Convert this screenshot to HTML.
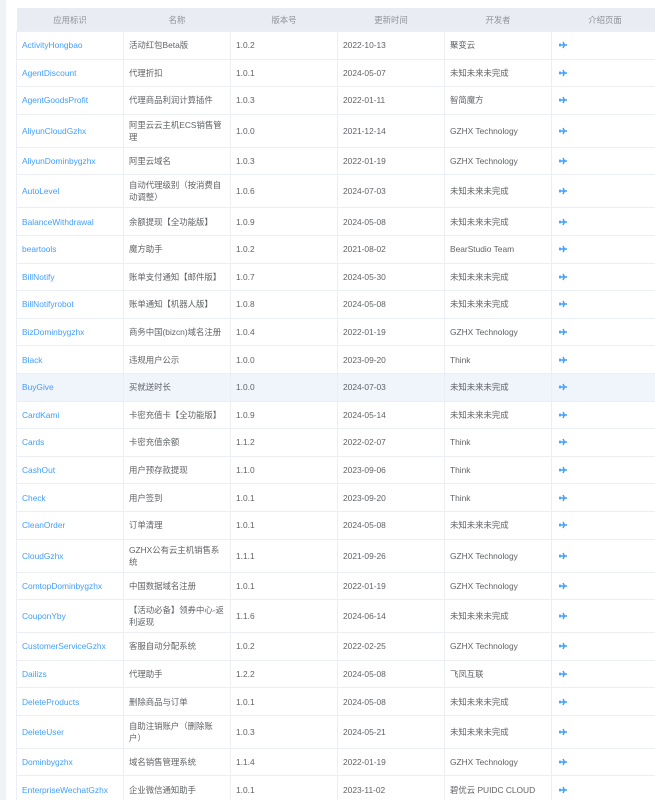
<!DOCTYPE html>
<html><head><meta charset="utf-8"><style>
html,body{margin:0;padding:0;width:655px;height:800px;overflow:hidden;background:#fff;}
body{font-family:"Liberation Sans","Noto Sans CJK SC",sans-serif;font-size:8.4px;color:#606266;position:relative}
.strip{position:absolute;left:0;top:0;width:6px;height:800px;background:#f0f2f5}
table{position:absolute;left:16px;top:8px;border-collapse:collapse;table-layout:fixed;width:642px}
col{width:107px}
th{height:23px;background:#e9ecf3;color:#909399;font-weight:normal;text-align:center;padding:0;border:none}
td{border:1px solid #ebeef5;padding:0 4px 0 5px;line-height:12px;vertical-align:middle;box-sizing:border-box;overflow:hidden}
tr.s td{height:27.6px;white-space:nowrap}
tr.d td{height:33px}
td.a{color:#409eff}
tr.h td{background:#f0f4fb}
svg{display:block;margin-left:2px}
</style></head><body>
<div class="strip"></div>
<table>
<colgroup><col><col><col><col><col><col></colgroup>
<tr><th>应用标识</th><th>名称</th><th>版本号</th><th>更新时间</th><th>开发者</th><th>介绍页面</th></tr>
<tr class="s"><td class="a">ActivityHongbao</td><td>活动红包Beta版</td><td>1.0.2</td><td>2022-10-13</td><td>聚变云</td><td><svg width="8" height="8" viewBox="0 0 8 8"><path d="M0 4h8M4 1l1.5 3L4 7M1 2.5v3" stroke="#409eff" stroke-width="1.4" fill="none"/></svg></td></tr>
<tr class="s"><td class="a">AgentDiscount</td><td>代理折扣</td><td>1.0.1</td><td>2024-05-07</td><td>未知未来未完成</td><td><svg width="8" height="8" viewBox="0 0 8 8"><path d="M0 4h8M4 1l1.5 3L4 7M1 2.5v3" stroke="#409eff" stroke-width="1.4" fill="none"/></svg></td></tr>
<tr class="s"><td class="a">AgentGoodsProfit</td><td>代理商品利润计算插件</td><td>1.0.3</td><td>2022-01-11</td><td>智简魔方</td><td><svg width="8" height="8" viewBox="0 0 8 8"><path d="M0 4h8M4 1l1.5 3L4 7M1 2.5v3" stroke="#409eff" stroke-width="1.4" fill="none"/></svg></td></tr>
<tr class="d"><td class="a">AliyunCloudGzhx</td><td>阿里云云主机ECS销售管<br>理</td><td>1.0.0</td><td>2021-12-14</td><td>GZHX Technology</td><td><svg width="8" height="8" viewBox="0 0 8 8"><path d="M0 4h8M4 1l1.5 3L4 7M1 2.5v3" stroke="#409eff" stroke-width="1.4" fill="none"/></svg></td></tr>
<tr class="s"><td class="a">AliyunDominbygzhx</td><td>阿里云域名</td><td>1.0.3</td><td>2022-01-19</td><td>GZHX Technology</td><td><svg width="8" height="8" viewBox="0 0 8 8"><path d="M0 4h8M4 1l1.5 3L4 7M1 2.5v3" stroke="#409eff" stroke-width="1.4" fill="none"/></svg></td></tr>
<tr class="d"><td class="a">AutoLevel</td><td>自动代理级别（按消费自<br>动调整）</td><td>1.0.6</td><td>2024-07-03</td><td>未知未来未完成</td><td><svg width="8" height="8" viewBox="0 0 8 8"><path d="M0 4h8M4 1l1.5 3L4 7M1 2.5v3" stroke="#409eff" stroke-width="1.4" fill="none"/></svg></td></tr>
<tr class="s"><td class="a">BalanceWithdrawal</td><td>余额提现【全功能版】</td><td>1.0.9</td><td>2024-05-08</td><td>未知未来未完成</td><td><svg width="8" height="8" viewBox="0 0 8 8"><path d="M0 4h8M4 1l1.5 3L4 7M1 2.5v3" stroke="#409eff" stroke-width="1.4" fill="none"/></svg></td></tr>
<tr class="s"><td class="a">beartools</td><td>魔方助手</td><td>1.0.2</td><td>2021-08-02</td><td>BearStudio Team</td><td><svg width="8" height="8" viewBox="0 0 8 8"><path d="M0 4h8M4 1l1.5 3L4 7M1 2.5v3" stroke="#409eff" stroke-width="1.4" fill="none"/></svg></td></tr>
<tr class="s"><td class="a">BillNotify</td><td>账单支付通知【邮件版】</td><td>1.0.7</td><td>2024-05-30</td><td>未知未来未完成</td><td><svg width="8" height="8" viewBox="0 0 8 8"><path d="M0 4h8M4 1l1.5 3L4 7M1 2.5v3" stroke="#409eff" stroke-width="1.4" fill="none"/></svg></td></tr>
<tr class="s"><td class="a">BillNotifyrobot</td><td>账单通知【机器人版】</td><td>1.0.8</td><td>2024-05-08</td><td>未知未来未完成</td><td><svg width="8" height="8" viewBox="0 0 8 8"><path d="M0 4h8M4 1l1.5 3L4 7M1 2.5v3" stroke="#409eff" stroke-width="1.4" fill="none"/></svg></td></tr>
<tr class="s"><td class="a">BizDominbygzhx</td><td>商务中国(bizcn)域名注册</td><td>1.0.4</td><td>2022-01-19</td><td>GZHX Technology</td><td><svg width="8" height="8" viewBox="0 0 8 8"><path d="M0 4h8M4 1l1.5 3L4 7M1 2.5v3" stroke="#409eff" stroke-width="1.4" fill="none"/></svg></td></tr>
<tr class="s"><td class="a">Black</td><td>违规用户公示</td><td>1.0.0</td><td>2023-09-20</td><td>Think</td><td><svg width="8" height="8" viewBox="0 0 8 8"><path d="M0 4h8M4 1l1.5 3L4 7M1 2.5v3" stroke="#409eff" stroke-width="1.4" fill="none"/></svg></td></tr>
<tr class="s h"><td class="a">BuyGive</td><td>买就送时长</td><td>1.0.0</td><td>2024-07-03</td><td>未知未来未完成</td><td><svg width="8" height="8" viewBox="0 0 8 8"><path d="M0 4h8M4 1l1.5 3L4 7M1 2.5v3" stroke="#409eff" stroke-width="1.4" fill="none"/></svg></td></tr>
<tr class="s"><td class="a">CardKami</td><td>卡密充值卡【全功能版】</td><td>1.0.9</td><td>2024-05-14</td><td>未知未来未完成</td><td><svg width="8" height="8" viewBox="0 0 8 8"><path d="M0 4h8M4 1l1.5 3L4 7M1 2.5v3" stroke="#409eff" stroke-width="1.4" fill="none"/></svg></td></tr>
<tr class="s"><td class="a">Cards</td><td>卡密充值余额</td><td>1.1.2</td><td>2022-02-07</td><td>Think</td><td><svg width="8" height="8" viewBox="0 0 8 8"><path d="M0 4h8M4 1l1.5 3L4 7M1 2.5v3" stroke="#409eff" stroke-width="1.4" fill="none"/></svg></td></tr>
<tr class="s"><td class="a">CashOut</td><td>用户预存款提现</td><td>1.1.0</td><td>2023-09-06</td><td>Think</td><td><svg width="8" height="8" viewBox="0 0 8 8"><path d="M0 4h8M4 1l1.5 3L4 7M1 2.5v3" stroke="#409eff" stroke-width="1.4" fill="none"/></svg></td></tr>
<tr class="s"><td class="a">Check</td><td>用户签到</td><td>1.0.1</td><td>2023-09-20</td><td>Think</td><td><svg width="8" height="8" viewBox="0 0 8 8"><path d="M0 4h8M4 1l1.5 3L4 7M1 2.5v3" stroke="#409eff" stroke-width="1.4" fill="none"/></svg></td></tr>
<tr class="s"><td class="a">CleanOrder</td><td>订单清理</td><td>1.0.1</td><td>2024-05-08</td><td>未知未来未完成</td><td><svg width="8" height="8" viewBox="0 0 8 8"><path d="M0 4h8M4 1l1.5 3L4 7M1 2.5v3" stroke="#409eff" stroke-width="1.4" fill="none"/></svg></td></tr>
<tr class="d"><td class="a">CloudGzhx</td><td>GZHX公有云主机销售系<br>统</td><td>1.1.1</td><td>2021-09-26</td><td>GZHX Technology</td><td><svg width="8" height="8" viewBox="0 0 8 8"><path d="M0 4h8M4 1l1.5 3L4 7M1 2.5v3" stroke="#409eff" stroke-width="1.4" fill="none"/></svg></td></tr>
<tr class="s"><td class="a">ComtopDominbygzhx</td><td>中国数据域名注册</td><td>1.0.1</td><td>2022-01-19</td><td>GZHX Technology</td><td><svg width="8" height="8" viewBox="0 0 8 8"><path d="M0 4h8M4 1l1.5 3L4 7M1 2.5v3" stroke="#409eff" stroke-width="1.4" fill="none"/></svg></td></tr>
<tr class="d"><td class="a">CouponYby</td><td>【活动必备】领券中心-返<br>利返现</td><td>1.1.6</td><td>2024-06-14</td><td>未知未来未完成</td><td><svg width="8" height="8" viewBox="0 0 8 8"><path d="M0 4h8M4 1l1.5 3L4 7M1 2.5v3" stroke="#409eff" stroke-width="1.4" fill="none"/></svg></td></tr>
<tr class="s"><td class="a">CustomerServiceGzhx</td><td>客服自动分配系统</td><td>1.0.2</td><td>2022-02-25</td><td>GZHX Technology</td><td><svg width="8" height="8" viewBox="0 0 8 8"><path d="M0 4h8M4 1l1.5 3L4 7M1 2.5v3" stroke="#409eff" stroke-width="1.4" fill="none"/></svg></td></tr>
<tr class="s"><td class="a">Dailizs</td><td>代理助手</td><td>1.2.2</td><td>2024-05-08</td><td>飞凤互联</td><td><svg width="8" height="8" viewBox="0 0 8 8"><path d="M0 4h8M4 1l1.5 3L4 7M1 2.5v3" stroke="#409eff" stroke-width="1.4" fill="none"/></svg></td></tr>
<tr class="s"><td class="a">DeleteProducts</td><td>删除商品与订单</td><td>1.0.1</td><td>2024-05-08</td><td>未知未来未完成</td><td><svg width="8" height="8" viewBox="0 0 8 8"><path d="M0 4h8M4 1l1.5 3L4 7M1 2.5v3" stroke="#409eff" stroke-width="1.4" fill="none"/></svg></td></tr>
<tr class="d"><td class="a">DeleteUser</td><td>自助注销账户（删除账<br>户）</td><td>1.0.3</td><td>2024-05-21</td><td>未知未来未完成</td><td><svg width="8" height="8" viewBox="0 0 8 8"><path d="M0 4h8M4 1l1.5 3L4 7M1 2.5v3" stroke="#409eff" stroke-width="1.4" fill="none"/></svg></td></tr>
<tr class="s"><td class="a">Dominbygzhx</td><td>域名销售管理系统</td><td>1.1.4</td><td>2022-01-19</td><td>GZHX Technology</td><td><svg width="8" height="8" viewBox="0 0 8 8"><path d="M0 4h8M4 1l1.5 3L4 7M1 2.5v3" stroke="#409eff" stroke-width="1.4" fill="none"/></svg></td></tr>
<tr class="s"><td class="a">EnterpriseWechatGzhx</td><td>企业微信通知助手</td><td>1.0.1</td><td>2023-11-02</td><td>碧优云 PUIDC CLOUD</td><td><svg width="8" height="8" viewBox="0 0 8 8"><path d="M0 4h8M4 1l1.5 3L4 7M1 2.5v3" stroke="#409eff" stroke-width="1.4" fill="none"/></svg></td></tr>
</table>
</body></html>
